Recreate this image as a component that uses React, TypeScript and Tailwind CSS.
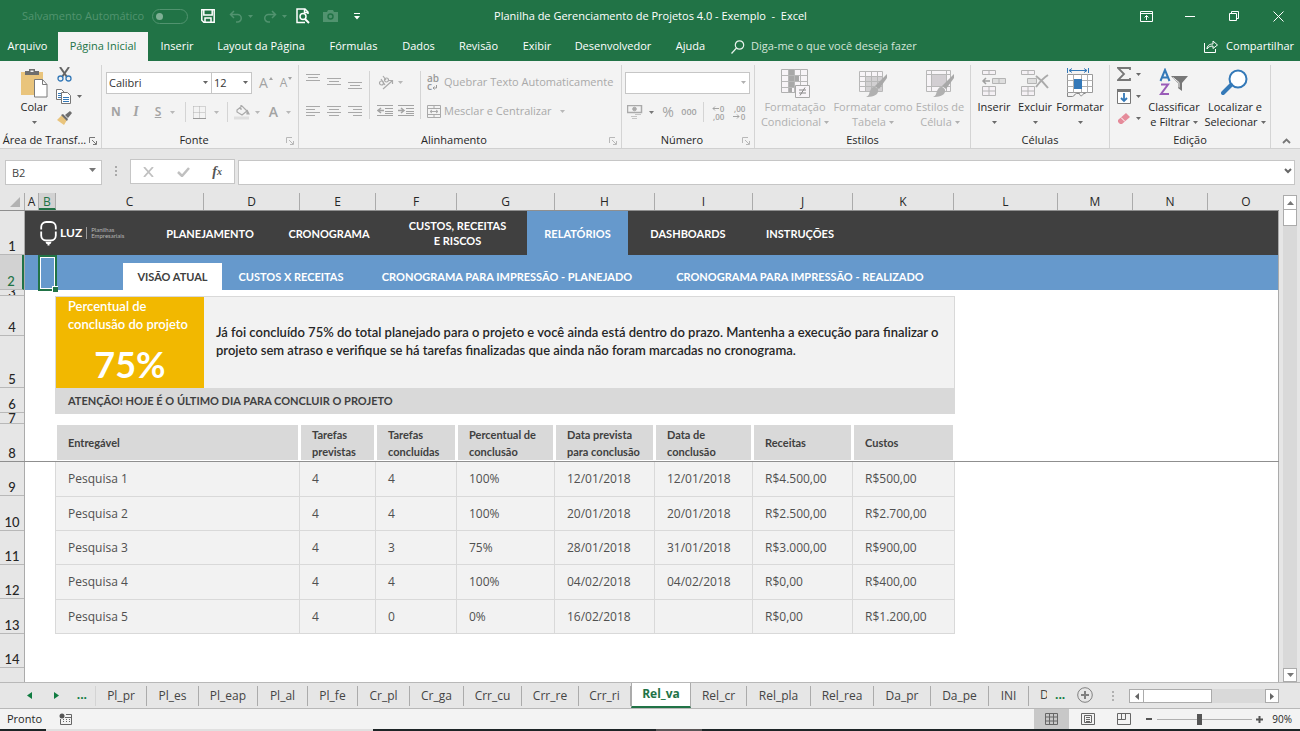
import React from 'react';

type Children = { children?: React.ReactNode };

const UI = "font-['Open_Sans','Noto_Sans',sans-serif]";
const CALIBRI = "font-['Lato','Open_Sans',sans-serif]";

const ribbonTabs = [
  { label: 'Arquivo', width: 'w-[58px]' },
  { label: 'Página Inicial', width: 'w-[90px]', active: true },
  { label: 'Inserir', width: 'w-[58px]' },
  { label: 'Layout da Página', width: 'w-[110px]' },
  { label: 'Fórmulas', width: 'w-[75px]' },
  { label: 'Dados', width: 'w-[55px]' },
  { label: 'Revisão', width: 'w-[65px]' },
  { label: 'Exibir', width: 'w-[52px]' },
  { label: 'Desenvolvedor', width: 'w-[100px]' },
  { label: 'Ajuda', width: 'w-[55px]' },
];

const columns = [
  { label: 'A', width: 'w-[14px]' },
  { label: 'B', width: 'w-[17px]', active: true },
  { label: 'C', width: 'w-[148px]' },
  { label: 'D', width: 'w-[96px]' },
  { label: 'E', width: 'w-[76px]' },
  { label: 'F', width: 'w-[81px]' },
  { label: 'G', width: 'w-[98px]' },
  { label: 'H', width: 'w-[100px]' },
  { label: 'I', width: 'w-[98px]' },
  { label: 'J', width: 'w-[100px]' },
  { label: 'K', width: 'w-[101px]' },
  { label: 'L', width: 'w-[104px]' },
  { label: 'M', width: 'w-[75px]' },
  { label: 'N', width: 'w-[75px]' },
];

const rows = [
  { label: '1', height: 'h-11 leading-4' },
  { label: '2', height: 'h-[35px] leading-4', active: true },
  { label: '3', height: 'h-[6px] leading-[5px]' },
  { label: '4', height: 'h-10 leading-4' },
  { label: '5', height: 'h-[52px] leading-4' },
  { label: '6', height: 'h-[25px] leading-4' },
  { label: '7', height: 'h-[11px] leading-[10px]' },
  { label: '8', height: 'h-[38px] leading-4' },
  { label: '9', height: 'h-[34px] leading-4' },
  { label: '10', height: 'h-[35px] leading-4' },
  { label: '11', height: 'h-[34px] leading-4' },
  { label: '12', height: 'h-[34px] leading-4' },
  { label: '13', height: 'h-[35px] leading-4' },
  { label: '14', height: 'h-[34px] leading-4' },
];

const tasks = [
  { height: 'h-[35px]', cells: ['Pesquisa 1', '4', '4', '100%', '12/01/2018', '12/01/2018', 'R$4.500,00', 'R$500,00'] },
  { height: 'h-[34px]', cells: ['Pesquisa 2', '4', '4', '100%', '20/01/2018', '20/01/2018', 'R$2.500,00', 'R$2.700,00'] },
  { height: 'h-[34px]', cells: ['Pesquisa 3', '4', '3', '75%', '28/01/2018', '31/01/2018', 'R$3.000,00', 'R$900,00'] },
  { height: 'h-[35px]', cells: ['Pesquisa 4', '4', '4', '100%', '04/02/2018', '04/02/2018', 'R$0,00', 'R$400,00'] },
  { height: 'h-[34px]', cells: ['Pesquisa 5', '4', '0', '0%', '16/02/2018', '', 'R$0,00', 'R$1.200,00'] },
];

const tableHead = [
  { label: 'Entregável', width: 'w-[245px]' },
  { label: 'Tarefas previstas', width: 'w-[76px]' },
  { label: 'Tarefas concluídas', width: 'w-[81px]' },
  { label: 'Percentual de conclusão', width: 'w-[98px]' },
  { label: 'Data prevista para conclusão', width: 'w-[100px]' },
  { label: 'Data de conclusão', width: 'w-[98px]' },
  { label: 'Receitas', width: 'w-[100px]' },
  { label: 'Custos', width: 'w-[102px]' },
];

const mainNav = [
  { label: 'PLANEJAMENTO', width: 'w-[120px]' },
  { label: 'CRONOGRAMA', width: 'w-[118px]' },
  { label: 'CUSTOS, RECEITAS E RISCOS', width: 'w-[139px] px-5' },
  { label: 'RELATÓRIOS', width: 'w-[101px]', active: true },
  { label: 'DASHBOARDS', width: 'w-[120px]' },
  { label: 'INSTRUÇÕES', width: 'w-[104px]' },
];

const subNav = [
  { label: 'VISÃO ATUAL', width: 'w-[99px]', active: true },
  { label: 'CUSTOS X RECEITAS', width: 'w-[138px]' },
  { label: 'CRONOGRAMA PARA IMPRESSÃO - PLANEJADO', width: 'w-[294px]' },
  { label: 'CRONOGRAMA PARA IMPRESSÃO - REALIZADO', width: 'w-[292px]' },
];

const sheetTabs = [
  { label: 'Pl_pr', width: 'w-[51px]' },
  { label: 'Pl_es', width: 'w-[52px]' },
  { label: 'Pl_eap', width: 'w-[59px]' },
  { label: 'Pl_al', width: 'w-[50px]' },
  { label: 'Pl_fe', width: 'w-[50px]' },
  { label: 'Cr_pl', width: 'w-[52px]' },
  { label: 'Cr_ga', width: 'w-[54px]' },
  { label: 'Crr_cu', width: 'w-[58px]' },
  { label: 'Crr_re', width: 'w-[57px]' },
  { label: 'Crr_ri', width: 'w-[52px]' },
  { label: 'Rel_va', width: 'w-[60px]', active: true },
  { label: 'Rel_cr', width: 'w-[56px]' },
  { label: 'Rel_pla', width: 'w-[64px]' },
  { label: 'Rel_rea', width: 'w-[63px]' },
  { label: 'Da_pr', width: 'w-[57px]' },
  { label: 'Da_pe', width: 'w-[58px]' },
  { label: 'INI', width: 'w-[40px]' },
];

const Caret = ({ className = 'text-[#6a6a6a]' }: { className?: string }) => (
  <svg width="5" height="3" viewBox="0 0 5 3" className={`shrink-0 ${className}`} aria-hidden="true">
    <path d="M0 0h5L2.5 3z" fill="currentColor" />
  </svg>
);

const Tool = ({ label, className = '', children }: Children & { label: string; className?: string }) => (
  <button type="button" aria-label={label} className={`flex h-4 shrink-0 items-center justify-center ${className}`}>
    {children}
  </button>
);

const Divider = ({ className = 'h-5' }: { className?: string }) => <span className={`w-px shrink-0 bg-[#d4d4d4] ${className}`} />;

const Group = ({ label, width, launcher, dim, children }: Children & { label: string; width: string; launcher?: boolean; dim?: boolean }) => (
  <section aria-label={label} className={`mt-1 flex shrink-0 flex-col border-r border-[#d4d4d4] ${width}`}>
    <div className="flex flex-1">{children}</div>
    <div className="flex h-[15px] items-center">
      <span className="flex-1 text-center whitespace-nowrap text-[#262626]">{label}</span>
      {launcher && (
        <button type="button" aria-label={`Opções de ${label}`} className={`mr-1 ${dim ? 'text-[#b8b8b8]' : 'text-[#777]'}`}>
          <svg width="8" height="8" viewBox="0 0 8 8" fill="none" stroke="currentColor" aria-hidden="true">
            <path d="M.5 6V.5H6M3 3l4 4M7.500 4v3.500H4" />
          </svg>
        </button>
      )}
    </div>
  </section>
);

const BigButton = ({ icon, lines, width, dim, caretBelow }: { icon: React.ReactNode; lines: string[]; width: string; dim?: boolean; caretBelow?: boolean }) => (
  <button type="button" className={`flex shrink-0 flex-col items-center justify-start pt-[2px] ${dim ? 'text-[#b0b0b0]' : 'text-[#262626]'} ${width}`}>
    <span className="mb-px flex h-8 items-center">{icon}</span>
    {lines.map((line, i) => (
      <span key={line} className="flex h-[15px] items-center gap-[3px] whitespace-nowrap">
        {line}
        {!caretBelow && i === lines.length - 1 && <Caret className={dim ? 'text-[#b0b0b0]' : 'text-[#6a6a6a]'} />}
      </span>
    ))}
    {caretBelow && (
      <span className="flex h-[15px] items-center">
        <Caret />
      </span>
    )}
  </button>
);

const AlignIcon = ({ lines }: { lines: [number, number][] }) => (
  <svg width="14" height="17" viewBox="0 0 14 17" stroke="#a9a9a9" aria-hidden="true">
    {lines.map(([x, w], i) => (
      <path key={i} d={`M${x} ${i * 3 + 3.5}h${w}`} />
    ))}
  </svg>
);

const VAlignIcon = ({ top }: { top: number }) => (
  <svg width="14" height="18" viewBox="0 0 14 18" stroke="#a9a9a9" aria-hidden="true">
    <path d={`M0 ${top + 0.5}h14M2 ${top + 3.5}h10M0 ${top + 6.5}h14`} />
  </svg>
);

const IndentIcon = ({ flip }: { flip?: boolean }) => (
  <svg width="16" height="12" viewBox="0 0 16 12" fill="none" stroke="#a3a3a3" aria-hidden="true">
    <path d="M0 .5h16M8 3.500h8M8 6.500h8M0 10.500h16M8 8.500h8" />
    <path d={flip ? 'M0 5.500h6M3 3l3 2.500L3 8' : 'M7 5.500H1M4 3L1 5.500L4 8'} strokeWidth="1.500" />
  </svg>
);

// arrow and zero on one line, two decimals on the other
const DecimalsIcon = ({ decrease }: { decrease?: boolean }) => (
  <span className={`flex items-end gap-[2px] text-[8px] leading-[11px] font-semibold ${decrease ? 'flex-col-reverse' : 'flex-col'}`}>
    <span className="flex h-[6px] items-center gap-px">
      <svg width="7" height="5" viewBox="0 0 7 5" fill="none" stroke="currentColor" aria-hidden="true">
        <path d={decrease ? 'M0 2.500h6M4 .5l2 2-2 2' : 'M7 2.500H1M3 .5l-2 2 2 2'} />
      </svg>
      0
    </span>
    <span className="flex h-[6px] items-center">,00</span>
  </span>
);

const BrushIcon = () => (
  <>
    <path d="M29 6v4l-8 11-4-3z" fill="#a8a8a8" />
    <path d="M16 19c2 0 5 2 4 5-1 4-7 5-12 5 3-1 3-3 4-6 1-2 2-4 4-4z" fill="#b0b0b0" />
  </>
);

const FormatTableIcon = () => (
  <svg width="30" height="30" viewBox="0 0 30 30" fill="none" aria-hidden="true">
    <path d="M1.500 3.500h23v20h-23z" fill="#f7f4f7" stroke="#b8b8b8" />
    <path d="M7 9h17v14H7z" fill="#d2d0d2" />
    <path d="M1.500 8.500h23M1.500 13.500h23M1.500 18.500h23M7.500 3.500v20M13.500 3.500v20M19.500 3.500v20" stroke="#b8b8b8" />
    <BrushIcon />
  </svg>
);

const CellStyleIcon = () => (
  <svg width="30" height="30" viewBox="0 0 30 30" fill="none" aria-hidden="true">
    <path d="M1.500 2.500h24v21h-24z" fill="#f7f4f7" stroke="#b8b8b8" />
    <path d="M7 7h14v11H7z" fill="#d2ced2" />
    <path d="M1.500 6.500h24M1.500 18.500h24M6.500 2.500v21M21.500 2.500v21" stroke="#b8b8b8" />
    <BrushIcon />
  </svg>
);

const ConditionalIcon = () => (
  <svg width="30" height="30" viewBox="0 0 30 30" fill="none" aria-hidden="true">
    <path d="M1.500 1.500h26v23h-26z" fill="#f7f4f7" stroke="#b0b0b0" />
    <path d="M9 2h6v5H9zM9 8h10v5H9zM9 14h5v5H9zM9 20h3v4H9z" fill="#a8a8a8" />
    <path d="M1.500 7.500h26M1.500 13.500h26M1.500 19.500h26M8.500 1.500v23M14.500 1.500v23M20.500 1.500v23" stroke="#b8b8b8" />
    <path d="M15.500 17.500h14v12h-14z" fill="#f8f5f8" stroke="#a8a8a8" />
    <path d="M19 22h7M19 25h7M25 19.500l-5 8" stroke="#888" />
  </svg>
);

const InsertIcon = () => (
  <svg width="26" height="30" viewBox="0 0 26 30" fill="#f5f1f5" stroke="#b4b4b4" aria-hidden="true">
    <path d="M1.500 2.500h13v4h-13zM8 2.500v4M1.500 18.500h13v9h-13zM8 18.500v9M1.500 23h13" />
    <path d="M11.500 10.500h13v5h-13z" fill="#dedede" />
    <path d="M18 10.500v5" />
    <path d="M9 13H2M5 10l-3 3 3 3" fill="none" strokeWidth="1.500" stroke="#a0a0a0" />
  </svg>
);

const DeleteIcon = () => (
  <svg width="30" height="30" viewBox="0 0 30 30" fill="#f5f1f5" stroke="#b4b4b4" aria-hidden="true">
    <path d="M1.500 2.500h13v4h-13zM8 2.500v4M1.500 18.500h13v9h-13zM8 18.500v9M1.500 23h13" />
    <path d="M7.500 10.500h9v5h-9z" fill="#dedede" />
    <path d="M16 8c4 3 8 7 12 12M28 7c-5 3-9 8-12 12" fill="none" strokeWidth="2" stroke="#aaa" />
  </svg>
);

const FormatIcon = () => (
  <svg width="28" height="30" viewBox="0 0 28 30" fill="none" aria-hidden="true">
    <path d="M1.500 6.500h25v18h-25z" fill="#fff" stroke="#999" />
    <path d="M1.500 12.500h25M1.500 18.500h25M7.500 6.500v18M15.500 6.500v18M21.500 6.500v18" stroke="#b0b0b0" />
    <path d="M8 11h8v10H8z" fill="#3479b8" />
    <path d="M1.500 25v3.500h5c2 0 2-3 4-3h3c0 3 3 3 4 0h2" stroke="#888" />
    <path d="M1.500 0v5M22.500 0v5M3 2.500h18M6 .5l-3 2 3 2M18 .5l3 2-3 2" stroke="#3479b8" />
  </svg>
);

const SortIcon = () => (
  <svg width="30" height="30" viewBox="0 0 30 30" aria-hidden="true">
    <path d="M1.500 13L6 2l4.500 11M3 9.500h6" fill="none" stroke="#3479b8" strokeWidth="2" />
    <path d="M2 16.500h7l-7 9.500h8" fill="none" stroke="#9a5cb8" strokeWidth="2" />
    <path d="M12 8h17l-6 7v8l-4-3v-5z" fill="#777" />
    <path d="M14 9.500l6 5v5" fill="none" stroke="#f3f3f3" />
  </svg>
);

const FindIcon = () => (
  <svg width="28" height="30" viewBox="0 0 28 30" fill="none" aria-hidden="true">
    <circle cx="17" cy="11" r="8.500" fill="#fff" stroke="#3479b8" strokeWidth="2" />
    <path d="M10 17l-8 8" stroke="#3479b8" strokeWidth="4" strokeLinecap="round" />
  </svg>
);

const PasteIcon = () => (
  <svg width="28" height="30" viewBox="0 0 28 30" aria-hidden="true">
    <path d="M1 4h22v23H1z" fill="#e9c47c" />
    <path d="M5 7V3h4V1h6v2h4v4z" fill="#6e6e6e" />
    <path d="M10.500 2.500h3V4h-3z" fill="#f3f3f3" />
    <path d="M14.500 11.500h8l4.500 5v12.500H14.500z" fill="#fff" stroke="#7a7a7a" />
    <path d="M22.500 11.500v5H27" fill="none" stroke="#7a7a7a" />
  </svg>
);

function TitleBar() {
  return (
    <header className="flex h-8 items-center bg-[#217346] pl-[22px] text-[11px] text-white">
      <label className="flex w-[166px] items-center justify-between text-[#51936f]">
        <span className="whitespace-nowrap">Salvamento Automático</span>
        <input
          type="checkbox"
          role="switch"
          disabled
          className="h-[15px] w-9 appearance-none rounded-full border border-[#51936f] before:m-[3px] before:block before:size-[7px] before:rounded-full before:bg-[#7fb095]"
        />
      </label>
      <div className="ml-3 flex items-center">
        <Tool label="Salvar" className="w-4">
          <svg width="14" height="14" viewBox="0 0 14 14" fill="none" stroke="#fff" strokeWidth="1.500" aria-hidden="true">
            <path d="M.8.800h12.400v12.400H2.800l-2-2zM2.800 1v5h8.400V1M4 13V9h6v4" />
          </svg>
        </Tool>
        <Tool label="Desfazer" className="ml-3 w-[26px] gap-[5px] text-[#51936f]">
          <svg width="14" height="13" viewBox="0 0 14 13" fill="none" stroke="currentColor" strokeWidth="1.500" aria-hidden="true">
            <path d="M5 1L1.500 4.500 5 8M2 4.500h6.500a3.500 3.500 0 0 1 0 7.500H7" />
          </svg>
          <Caret className="text-[#51936f]" />
        </Tool>
        <Tool label="Refazer" className="ml-2 w-[26px] gap-[5px] text-[#51936f]">
          <svg width="14" height="13" viewBox="0 0 14 13" fill="none" stroke="currentColor" strokeWidth="1.500" aria-hidden="true">
            <path d="M9 1l3.500 3.500L9 8M12 4.500H5.500a3.500 3.500 0 0 0 0 7.500H7" />
          </svg>
          <Caret className="text-[#51936f]" />
        </Tool>
        <Tool label="Visualizar impressão" className="ml-[7px] w-4">
          <svg width="14" height="16" viewBox="0 0 14 16" fill="none" stroke="#fff" strokeWidth="1.500" aria-hidden="true">
            <path d="M12 6V4L9 1H1v13.500h8M8.500 1v3.500H12" />
            <circle cx="7" cy="8.500" r="3" />
            <path d="M9 11l4 4" strokeWidth="2" />
          </svg>
        </Tool>
        <Tool label="Câmera" className="ml-[11px] w-4">
          <svg width="15" height="12" viewBox="0 0 15 12" aria-hidden="true">
            <path d="M0 2h4l1-2h5l1 2h4v10H0z" fill="#51936f" />
            <circle cx="7.500" cy="6.500" r="2.500" fill="none" stroke="#217346" strokeWidth="1.500" />
          </svg>
        </Tool>
        <Tool label="Personalizar" className="ml-[15px] w-2">
          <svg width="6" height="7" viewBox="0 0 6 7" fill="#fff" aria-hidden="true">
            <path d="M0 0h6v1H0zM0 3h6L3 6.500z" />
          </svg>
        </Tool>
      </div>
      <h1 className="flex-1 pr-[184px] text-center whitespace-pre">Planilha de Gerenciamento de Projetos 4.0 - Exemplo  -  Excel</h1>
      <div className="flex items-center pr-4">
        <Tool label="Opções da faixa" className="w-11">
          <svg width="13" height="11" viewBox="0 0 13 11" fill="none" stroke="#fff" aria-hidden="true">
            <path d="M.5.500h12v10H.5zM.5 2.500h12M6.500 9V4.500M4.500 6.500l2-2 2 2" />
          </svg>
        </Tool>
        <Tool label="Minimizar" className="w-11">
          <span className="h-px w-[10px] bg-white" />
        </Tool>
        <Tool label="Restaurar" className="w-11">
          <svg width="10" height="10" viewBox="0 0 10 10" fill="none" stroke="#fff" aria-hidden="true">
            <path d="M.5 2.500h7v7h-7zM2.500 2.500v-2h7v7h-2" />
          </svg>
        </Tool>
        <Tool label="Fechar" className="ml-4 w-3">
          <svg width="11" height="11" viewBox="0 0 11 11" fill="none" stroke="#fff" aria-hidden="true">
            <path d="M.5.500l10 10M10.500.500l-10 10" />
          </svg>
        </Tool>
      </div>
    </header>
  );
}

function RibbonTabs() {
  return (
    <nav className="flex h-[29px] items-stretch bg-[#217346] text-[11px] text-white">
      {ribbonTabs.map((tab) => (
        <button
          key={tab.label}
          type="button"
          className={`shrink-0 font-medium whitespace-nowrap ${tab.width} ${tab.label === 'Arquivo' ? 'pr-[3px]' : ''} ${tab.active ? 'bg-[#f3f3f3] text-[#217346]' : ''}`}
        >
          {tab.label}
        </button>
      ))}
      <label className="ml-[13px] flex items-center gap-[6px] text-[#d3e5da]">
        <svg width="14" height="14" viewBox="0 0 14 14" fill="none" stroke="#e8f2ec" strokeWidth="1.200" aria-hidden="true">
          <circle cx="8.500" cy="5" r="4.200" />
          <path d="M5.500 8L.5 13.500" />
        </svg>
        <input type="text" placeholder="Diga-me o que você deseja fazer" className="w-[200px] bg-transparent outline-none placeholder:text-[#d3e5da]" />
      </label>
      <button type="button" className="mr-[6px] ml-auto flex items-center gap-2 font-medium">
        <svg width="14" height="13" viewBox="0 0 14 13" fill="none" stroke="#fff" aria-hidden="true">
          <path d="M.5 3v9.500h11V9M3 9c0-3 2-5 6-5V1l4.500 4L9 8.500V6C6 6 4 7 3 9z" />
        </svg>
        Compartilhar
      </button>
    </nav>
  );
}

function ClipboardGroup() {
  return (
    <Group label="Área de Transf..." width="w-[102px]" launcher>
      <div className="flex gap-[3px] pl-[15px]">
        <BigButton icon={<PasteIcon />} lines={['Colar']} width="w-[38px]" caretBelow />
        <div className="flex flex-col gap-[6px] pt-px">
          <Tool label="Recortar" className="w-4">
            <svg width="15" height="15" viewBox="0 0 15 15" fill="none" aria-hidden="true">
              <path d="M3 0l7 10M12 0L5 10" stroke="#666" strokeWidth="2" />
              <circle cx="3.500" cy="11.500" r="2.500" stroke="#3479b8" strokeWidth="1.300" />
              <circle cx="11.500" cy="11.500" r="2.500" stroke="#3479b8" strokeWidth="1.300" />
            </svg>
          </Tool>
          <Tool label="Copiar" className="w-[26px] gap-[5px]">
            <svg width="16" height="15" viewBox="0 0 16 15" fill="#fff" stroke="#777" className="shrink-0" aria-hidden="true">
              <path d="M.5.500h5l3 3v7h-8z" />
              <path d="M5.500 3.500h6l3 3v8h-9z" />
              <path d="M2 4.500h3M2 6.500h3M2 8.500h3M7 8.500h6M7 10.500h6M7 12.500h6" stroke="#3479b8" />
            </svg>
            <Caret />
          </Tool>
          <Tool label="Pincel" className="w-4">
            <svg width="15" height="14" viewBox="0 0 15 14" aria-hidden="true">
              <path d="M0 9l5-5 5 5-3 5z" fill="#e9c47c" />
              <path d="M4 4l2-1 5 5-1 2zM8 4l5-4 2 2-4 5z" fill="#6e6e6e" />
            </svg>
          </Tool>
        </div>
      </div>
    </Group>
  );
}

function FontGroup() {
  return (
    <Group label="Fonte" width="w-[197px]" launcher dim>
      <div className="flex flex-1 flex-col gap-2 pt-[7px] pl-1">
        <div className="flex items-center">
          <div className="relative h-[22px] w-[106px]">
            <select aria-label="Fonte" className="size-full appearance-none border border-[#c6c6c6] bg-white pl-[2px] text-[#333]">
              <option>Calibri</option>
            </select>
            <Caret className="absolute top-[9px] right-1 text-[#666]" />
          </div>
          <div className="relative -ml-px h-[22px] w-[41px]">
            <select aria-label="Tamanho" className="size-full appearance-none border border-[#c6c6c6] bg-white pl-[2px] text-[#333]">
              <option>12</option>
            </select>
            <Caret className="absolute top-[9px] right-1 text-[#666]" />
          </div>
          <Tool label="Aumentar fonte" className="ml-[6px] w-4 gap-px text-sm text-[#a3a3a3]">
            A
            <svg width="4" height="12" viewBox="0 0 4 12" fill="currentColor" aria-hidden="true">
              <path d="M0 3l2-3 2 3z" />
            </svg>
          </Tool>
          <Tool label="Diminuir fonte" className="ml-1 w-4 gap-px text-xs text-[#a3a3a3]">
            A
            <svg width="4" height="12" viewBox="0 0 4 12" fill="currentColor" aria-hidden="true">
              <path d="M0 0h4L2 3z" />
            </svg>
          </Tool>
        </div>
        <div className="flex items-center pl-1 text-xs text-[#a3a3a3]">
          <Tool label="Negrito" className="w-3 font-bold">N</Tool>
          <Tool label="Itálico" className="ml-2 w-3 font-['Liberation_Serif',serif] text-sm font-bold italic">I</Tool>
          <Tool label="Sublinhado" className="ml-[10px] w-[26px] gap-[9px] font-semibold">
            <span className="underline">S</span>
            <Caret className="text-[#b8b8b8]" />
          </Tool>
          <Divider className="ml-[7px] h-5" />
          <Tool label="Bordas" className="ml-[7px] w-[26px] gap-2">
            <svg width="13" height="13" viewBox="0 0 13 13" fill="none" stroke="#b0b0b0" aria-hidden="true">
              <path d="M.5.500h12M.5 6.500h12M.5.500v12M6.500.500v12M12.500.500v12" strokeDasharray="1 1" />
              <path d="M0 12.500h13" stroke="#999" />
            </svg>
            <Caret className="text-[#b8b8b8]" />
          </Tool>
          <Divider className="ml-2 h-5" />
          <Tool label="Preenchimento" className="ml-[6px] w-[26px] gap-[5px]">
            <svg width="16" height="16" viewBox="0 0 16 16" fill="none" stroke="#aaa" strokeWidth="1.200" aria-hidden="true">
              <path d="M7 1v5M3 6l5-4 5 5-5 4-5-3z" />
              <path d="M13 6l2 4h-2z" fill="#aaa" />
              <path d="M0 14h15" stroke="#dedede" strokeWidth="3" />
            </svg>
            <Caret className="text-[#b8b8b8]" />
          </Tool>
          <Tool label="Cor da fonte" className="ml-[7px] w-[26px] gap-2 text-sm font-semibold">
            A
            <Caret className="text-[#b8b8b8]" />
          </Tool>
        </div>
      </div>
    </Group>
  );
}

function AlignmentGroup() {
  return (
    <Group label="Alinhamento" width="w-[323px]" launcher dim>
      <div className="flex flex-1 pt-[6px] pl-[7px] text-[#a9a9a9]">
        <div className="flex flex-col gap-[10px]">
          <div className="flex h-[22px] items-center gap-[7px]">
            <Tool label="Alinhar em cima"><VAlignIcon top={1} /></Tool>
            <Tool label="Alinhar no meio"><VAlignIcon top={5} /></Tool>
            <Tool label="Alinhar embaixo"><VAlignIcon top={9} /></Tool>
          </div>
          <div className="flex items-center gap-[7px]">
            <Tool label="Alinhar à esquerda"><AlignIcon lines={[[0, 14], [0, 9], [0, 14], [0, 9]]} /></Tool>
            <Tool label="Centralizar"><AlignIcon lines={[[0, 14], [2, 10], [0, 14], [2, 10]]} /></Tool>
            <Tool label="Alinhar à direita"><AlignIcon lines={[[0, 14], [5, 9], [0, 14], [5, 9]]} /></Tool>
          </div>
        </div>
        <Divider className="mx-[7px] h-12" />
        <div className="flex flex-col gap-[10px]">
          <div className="flex h-[22px] items-center">
            <Tool label="Orientação" className="w-[27px] gap-1">
              <svg width="16" height="15" viewBox="0 0 16 15" fill="none" stroke="#a9a9a9" strokeWidth="1.200" aria-hidden="true">
                <circle cx="3.500" cy="8" r="2" />
                <circle cx="8.500" cy="5" r="2" />
                <path d="M3 4l4 6M5 1l3 4M5 14l9-8M11 5.500h3.500V9" />
              </svg>
              <Caret className="text-[#b8b8b8]" />
            </Tool>
          </div>
          <div className="flex items-center gap-[5px]">
            <Tool label="Diminuir recuo"><IndentIcon /></Tool>
            <Tool label="Aumentar recuo"><IndentIcon flip /></Tool>
          </div>
        </div>
        <Divider className="mx-[6px] h-12" />
        <div className="flex flex-col gap-[10px]">
          <button type="button" className="flex h-[22px] items-center gap-[3px] whitespace-nowrap">
            <span className="flex w-[14px] flex-col items-start text-[10px] leading-[8px] font-semibold text-[#999]">
              ab
              <span className="flex items-end">
                c
                <svg width="5" height="5" viewBox="0 0 5 5" fill="none" stroke="currentColor" aria-hidden="true">
                  <path d="M4.500 0v3H1M2.500 1.500L1 3l1.500 1.500" />
                </svg>
              </span>
            </span>
            Quebrar Texto Automaticamente
          </button>
          <button type="button" className="flex h-4 items-center gap-[3px] whitespace-nowrap">
            <svg width="14" height="13" viewBox="0 0 14 13" fill="none" stroke="#a9a9a9" aria-hidden="true">
              <path d="M.5.500h13v12H.5zM.5 3.500h13M.5 9.500h13M7 .5v3M7 9.500v3M3 6.500h8M5 5L3 6.500 5 8M9 5l2 1.500L9 8" />
            </svg>
            Mesclar e Centralizar
            <Caret className="ml-[5px] text-[#b8b8b8]" />
          </button>
        </div>
      </div>
    </Group>
  );
}

function NumberGroup() {
  return (
    <Group label="Número" width="w-[133px]" launcher dim>
      <div className="flex flex-1 flex-col gap-2 pt-[7px] pr-1 pl-[3px]">
        <div className="relative h-[22px]">
          <select aria-label="Formato de número" className="size-full appearance-none border border-[#c6c6c6] bg-white">
            <option></option>
          </select>
          <Caret className="absolute top-[9px] right-1 text-[#b0b0b0]" />
        </div>
        <div className="flex items-center pl-[2px] text-[#a3a3a3]">
          <Tool label="Formato de contabilização" className="w-[27px] gap-[6px]">
            <svg width="16" height="14" viewBox="0 0 16 14" fill="none" stroke="#aaa" aria-hidden="true">
              <path d="M.5.500h14v7H.5z" strokeWidth="1.500" />
              <circle cx="7.500" cy="4" r="1.800" fill="#aaa" />
              <path d="M8 9.500h6M4 11.500h6M5 13.500h5" stroke="#c4c4c4" />
            </svg>
            <Caret className="text-[#777]" />
          </Tool>
          <Tool label="Porcentagem" className="ml-[6px] w-4 text-sm">%</Tool>
          <Tool label="Milhares" className="ml-[5px] w-4 text-[9px] font-semibold">000</Tool>
          <Divider className="mx-[6px] h-5" />
          <Tool label="Aumentar casas" className="w-4">
            <DecimalsIcon />
          </Tool>
          <Tool label="Diminuir casas" className="ml-[5px] w-4">
            <DecimalsIcon decrease />
          </Tool>
        </div>
      </div>
    </Group>
  );
}

function EditingGroup() {
  return (
    <Group label="Edição" width="w-[161px]">
      <div className="flex w-[32px] flex-col gap-[6px] pt-px pl-[7px]">
        <Tool label="AutoSoma" className="w-6 gap-[5px]">
          <svg width="14" height="14" viewBox="0 0 14 14" fill="none" stroke="#777" strokeWidth="1.800" aria-hidden="true">
            <path d="M13 3V1H1l6 6-6 6h12v-2" />
          </svg>
          <Caret />
        </Tool>
        <Tool label="Preencher" className="w-6 gap-[5px]">
          <svg width="14" height="15" viewBox="0 0 14 15" fill="#fff" stroke="#777" aria-hidden="true">
            <path d="M.5.500h13v14H.5z" />
            <path d="M0 1.500h14" strokeWidth="3" />
            <path d="M7 4v8M4 9l3 3 3-3" fill="none" stroke="#3479b8" strokeWidth="1.800" />
          </svg>
          <Caret />
        </Tool>
        <Tool label="Limpar" className="w-6 gap-[5px]">
          <svg width="14" height="13" viewBox="0 0 14 13" aria-hidden="true">
            <path d="M1 8l8-7 4 4-8 7H3L1 10z" fill="#e58b9a" />
            <path d="M4 5.500l4 4" stroke="#fff" />
          </svg>
          <Caret />
        </Tool>
      </div>
      <BigButton icon={<SortIcon />} lines={['Classificar', 'e Filtrar']} width="w-[64px]" />
      <BigButton icon={<FindIcon />} lines={['Localizar e', 'Selecionar']} width="w-[58px]" />
    </Group>
  );
}

function Ribbon() {
  return (
    <div className="flex h-[88px] border-b border-[#d0d0d0] bg-[#f3f3f3] text-[11px]">
      <ClipboardGroup />
      <FontGroup />
      <AlignmentGroup />
      <NumberGroup />
      <Group label="Estilos" width="w-[216px]">
        <BigButton icon={<ConditionalIcon />} lines={['Formatação', 'Condicional']} width="w-[80px]" dim />
        <BigButton icon={<FormatTableIcon />} lines={['Formatar como', 'Tabela']} width="w-[76px]" dim />
        <BigButton icon={<CellStyleIcon />} lines={['Estilos de', 'Célula']} width="w-[58px]" dim />
      </Group>
      <Group label="Células" width="w-[139px]">
        <BigButton icon={<InsertIcon />} lines={['Inserir']} width="w-[46px]" caretBelow />
        <BigButton icon={<DeleteIcon />} lines={['Excluir']} width="w-[36px]" caretBelow />
        <BigButton icon={<FormatIcon />} lines={['Formatar']} width="w-[54px]" caretBelow />
      </Group>
      <EditingGroup />
      <button type="button" aria-label="Recolher faixa" className="mt-auto mr-[9px] mb-1 ml-auto">
        <svg width="9" height="6" viewBox="0 0 9 6" fill="none" stroke="#777" strokeWidth="1.800" aria-hidden="true">
          <path d="M1 5l3.500-3.500L8 5" />
        </svg>
      </button>
    </div>
  );
}

function FormulaBar() {
  return (
    <div className="flex items-center px-[5px] pt-[10px] pb-[9px]">
      <div className="relative h-[25px] w-[97px]">
        <input aria-label="Caixa de nome" defaultValue="B2" className="size-full border border-[#c6c6c6] bg-white pl-[6px] text-[11px] text-[#444]" />
        <svg width="7" height="4" viewBox="0 0 7 4" className="absolute top-[9px] right-[6px]" aria-hidden="true">
          <path d="M0 0h7L3.500 4z" fill="#777" />
        </svg>
      </div>
      <svg width="2" height="11" viewBox="0 0 2 11" fill="#aaa" className="mx-[13px]" aria-hidden="true">
        <path d="M0 0h2v2H0zM0 4h2v2H0zM0 8h2v2H0z" />
      </svg>
      <div className="flex h-[25px] w-[105px] items-center justify-between border border-[#c6c6c6] bg-white px-3">
        <Tool label="Cancelar">
          <svg width="11" height="10" viewBox="0 0 11 10" stroke="#c0c0c0" strokeWidth="1.800" aria-hidden="true">
            <path d="M1 0l9 10M10 0L1 10" />
          </svg>
        </Tool>
        <Tool label="Inserir">
          <svg width="13" height="10" viewBox="0 0 13 10" fill="none" stroke="#c0c0c0" strokeWidth="2.500" aria-hidden="true">
            <path d="M1 5l4 4 7-8" />
          </svg>
        </Tool>
        <Tool label="Inserir função" className="font-['Liberation_Serif',serif] text-sm font-bold text-[#555] italic">
          f<span className="pt-px text-[10px]">x</span>
        </Tool>
      </div>
      <div className="relative ml-[3px] h-[25px] flex-1">
        <input aria-label="Barra de fórmulas" className="size-full border border-[#c6c6c6] bg-white px-2 text-[11px]" />
        <svg width="8" height="6" viewBox="0 0 8 6" fill="none" stroke="#666" strokeWidth="2" className="absolute top-[9px] right-[3px]" aria-hidden="true">
          <path d="M1 1l3 3 3-3" />
        </svg>
      </div>
    </div>
  );
}

function ColumnHeader() {
  return (
    <div className="flex h-[18px] overflow-hidden border-b border-[#8f8f8f] text-xs font-medium text-[#262626]">
      <button type="button" aria-label="Selecionar tudo" className="flex w-[25px] shrink-0 items-end justify-end border-r border-[#ababab] pr-1 pb-[3px]">
        <svg width="10" height="10" viewBox="0 0 10 10" aria-hidden="true">
          <path d="M10 0v10H0z" fill="#b2b2b2" />
        </svg>
      </button>
      {columns.map((col) => (
        <div
          key={col.label}
          className={`shrink-0 border-r border-[#ababab] text-center leading-[18px] ${col.width} ${
            col.active ? 'border-b-2 border-b-[#217346] bg-[#d2d2d2] text-[#217346]' : ''
          }`}
        >
          {col.label}
        </div>
      ))}
      <div className="w-[76px] shrink-0 text-center leading-[18px]">O</div>
    </div>
  );
}

function Logo() {
  return (
    <div className="flex w-[125px] shrink-0 items-center pl-[15px] text-white">
      <svg width="17" height="25" viewBox="0 0 17 25" fill="none" stroke="#fff" strokeWidth="1.800" aria-hidden="true">
        <path d="M1.200 8.500V6a5 5 0 0 1 5-5h4.600a5 5 0 0 1 5 5v2.500M1.200 10.500v4a5 5 0 0 0 5 5h4.600a5 5 0 0 0 5-5v-4" />
        <path d="M5.500 21h6l-1 2h-1v1.500h-2V23h-1z" fill="#fff" stroke="none" />
      </svg>
      <span className="ml-[3px] text-xs leading-4">LUZ</span>
      <span className="ml-1 border-l border-[#999] pl-1 text-[6px] leading-[6px] font-normal text-[#b5b5b5]">
        Planilhas
        <br />
        Empresariais
      </span>
    </div>
  );
}

function Report() {
  return (
    <div className={`min-w-0 flex-1 overflow-hidden border-r border-[#ababab] bg-white ${CALIBRI}`}>
      <nav className="flex h-11 bg-[#404040] text-[11px] leading-[15px] font-bold text-white">
        <Logo />
        {mainNav.map((item) => (
          <a key={item.label} href="#" className={`flex shrink-0 items-center justify-center text-center ${item.width} ${item.active ? 'bg-[#6699cc]' : ''}`}>
            {item.label}
          </a>
        ))}
      </nav>
      <nav className="relative flex h-[35px] items-end bg-[#6699cc] pl-[98px] text-[11px] font-bold text-white">
        {subNav.map((item) => (
          <a
            key={item.label}
            href="#"
            className={`flex h-[27px] shrink-0 items-center justify-center pt-[2px] whitespace-nowrap ${item.width} ${item.active ? 'bg-white text-[#404040]' : ''}`}
          >
            {item.label}
          </a>
        ))}
        {/* selected cell B2 */}
        <div className="absolute top-0 left-[13px] h-9 w-[19px] border-2 border-[#217346]">
          <div className="size-full border border-white" />
          <div className="absolute -right-[3px] -bottom-[3px] size-[6px] border-t border-l border-white bg-[#217346]" />
        </div>
      </nav>

      <section className="mt-[6px] ml-[30px] w-[900px] border border-[#d9d9d9]">
        <div className="flex h-[91px]">
          <div className="flex w-[148px] shrink-0 flex-col bg-[#f2b800] pl-3 text-white">
            <p className="text-[13px] leading-[18px] font-semibold">
              Percentual de
              <br />
              conclusão do projeto
            </p>
            <p className="mt-[11px] pr-3 text-center text-4xl leading-[40px] font-bold">75%</p>
          </div>
          <div className="flex flex-1 items-center bg-[#f2f2f2] pb-1 pl-3">
            <p className="text-[13px] leading-[18px] font-semibold whitespace-nowrap text-[#262626]">
              Já foi concluído 75% do total planejado para o projeto e você ainda está dentro do prazo. Mantenha a execução para finalizar o
              <br />
              projeto sem atraso e verifique se há tarefas finalizadas que ainda não foram marcadas no cronograma.
            </p>
          </div>
        </div>
        <p className="h-[25px] bg-[#d9d9d9] pl-3 text-[11px] leading-[25px] font-bold text-[#404040]">
          ATENÇÃO! HOJE É O ÚLTIMO DIA PARA CONCLUIR O PROJETO
        </p>
      </section>

      <table className={`mt-[10px] ml-[30px] w-[900px] table-fixed border-separate border-spacing-0 text-left text-[#505050] ${UI}`}>
        <thead>
          <tr className={`h-[38px] text-[11px] leading-[17px] text-[#404040] ${CALIBRI}`}>
            {tableHead.map((col) => (
              <th key={col.label} className={`border-2 border-t-1 border-l-1 border-white bg-[#d9d9d9] py-0 pr-1 pl-[11px] font-bold first:border-l-2 ${col.width}`}>
                {col.label}
              </th>
            ))}
          </tr>
        </thead>
        <tbody>
          {tasks.map((task) => (
            <tr key={task.cells[0]} className={`bg-[#f2f2f2] text-xs ${task.height}`}>
              {task.cells.map((cell, i) => (
                <td key={i} className="border-r border-b border-[#d9d9d9] py-0 pr-0 pl-3 first:border-l">
                  {cell}
                </td>
              ))}
            </tr>
          ))}
        </tbody>
      </table>
    </div>
  );
}

function Sheet() {
  return (
    <div className="flex min-h-0 flex-1">
      <div className="flex min-w-0 flex-1 flex-col">
        <ColumnHeader />
        <div className="relative flex min-h-0 flex-1">
          <div className={`w-[25px] shrink-0 overflow-hidden border-r border-[#ababab] text-[13px] font-medium text-[#262626] ${CALIBRI}`}>
            {rows.map((row) => (
              <div
                key={row.label}
                className={`flex items-end justify-center overflow-hidden border-b border-[#b8b8b8] ${row.height} ${
                  row.active ? 'border-r-2 border-r-[#217346] bg-[#d2d2d2] text-[#217346]' : ''
                }`}
              >
                {row.label}
              </div>
            ))}
          </div>
          <Report />
          {/* frozen panes line */}
          <div className="absolute top-[250px] left-0 h-px w-full bg-[#8f8f8f]" />
        </div>
      </div>
      <div className="mr-[3px] ml-1 flex w-[14px] shrink-0 flex-col pt-[2px]">
        <button type="button" aria-label="Rolar para cima" className="flex h-[15px] items-center justify-center border border-[#ababab] bg-white">
          <svg width="7" height="4" viewBox="0 0 7 4" fill="#777" aria-hidden="true">
            <path d="M0 4h7L3.500 0z" />
          </svg>
        </button>
        <div className="flex-1 bg-[#d9d9d9]">
          <div className="h-4 border border-t-0 border-[#ababab] bg-white" />
        </div>
        <button type="button" aria-label="Rolar para baixo" className="flex h-[14px] items-center justify-center border border-[#ababab] bg-white">
          <svg width="7" height="4" viewBox="0 0 7 4" fill="#777" aria-hidden="true">
            <path d="M0 0h7L3.500 4z" />
          </svg>
        </button>
      </div>
    </div>
  );
}

function SheetTabs() {
  return (
    <div className="flex h-[27px] items-start border-t border-b border-[#b8b8b8] text-xs text-[#444]">
      <div className="flex h-6 w-[95px] shrink-0 items-center justify-end gap-[22px] pr-2 text-[#107c41]">
        <Tool label="Planilha anterior">
          <svg width="5" height="7" viewBox="0 0 5 7" fill="currentColor" aria-hidden="true">
            <path d="M5 0v7L0 3.500z" />
          </svg>
        </Tool>
        <Tool label="Próxima planilha">
          <svg width="5" height="7" viewBox="0 0 5 7" fill="currentColor" aria-hidden="true">
            <path d="M0 0v7l5-3.500z" />
          </svg>
        </Tool>
        <span className="-ml-1 font-bold">...</span>
      </div>
      <div className="flex h-[25px] items-center">
        <Divider className="h-5 bg-[#ababab]" />
        {sheetTabs.map((tab) => (
          <button
            key={tab.label}
            type="button"
            className={`shrink-0 ${tab.width} ${
              tab.active ? '-mt-px h-[25px] border-x border-b-2 border-x-[#ababab] border-b-[#217346] bg-white font-bold text-[#217346]' : 'h-5 border-r border-[#ababab]'
            }`}
          >
            {tab.label}
          </button>
        ))}
      </div>
      <div className="flex h-6 items-center">
        <span className="ml-[11px] w-[7px] overflow-hidden">D</span>
        <span className="ml-2 font-bold text-[#107c41]">...</span>
        <Tool label="Nova planilha" className="ml-3">
          <svg width="16" height="16" viewBox="0 0 16 16" fill="none" stroke="#808080" aria-hidden="true">
            <circle cx="8" cy="8" r="7.300" />
            <path d="M8 4v8M4 8h8" strokeWidth="2" />
          </svg>
        </Tool>
      </div>
      <div className="mr-[21px] ml-auto flex h-[26px] shrink-0 items-center">
        <svg width="2" height="10" viewBox="0 0 2 10" fill="#b0b0b0" className="mr-[15px]" aria-hidden="true">
          <path d="M0 0h2v2H0zM0 4h2v2H0zM0 8h2v2H0z" />
        </svg>
        <button type="button" aria-label="Rolar para a esquerda" className="flex h-[14px] w-[15px] items-center justify-center border border-[#ababab] bg-white">
          <svg width="4" height="7" viewBox="0 0 4 7" fill="#666" aria-hidden="true">
            <path d="M4 0v7L0 3.500z" />
          </svg>
        </button>
        <div className="h-[14px] w-[121px] bg-[#d9d9d9]">
          <div className="h-full w-[68px] border border-l-0 border-[#ababab] bg-white" />
        </div>
        <button type="button" aria-label="Rolar para a direita" className="flex size-[14px] items-center justify-center border border-[#ababab] bg-white">
          <svg width="4" height="7" viewBox="0 0 4 7" fill="#666" aria-hidden="true">
            <path d="M0 0v7l4-3.500z" />
          </svg>
        </button>
      </div>
    </div>
  );
}

function StatusBar() {
  return (
    <footer className="flex h-5 items-center bg-[#f3f3f3] pl-[7px] text-[11px] text-[#262626]">
      <span className="w-[35px]">Pronto</span>
      <Tool label="Gravar macro" className="ml-[17px]">
        <svg width="13" height="12" viewBox="0 0 13 12" fill="none" stroke="#666" aria-hidden="true">
          <path d="M7 1.500h5.500v10h-11V6M6 4.500h6M4 6.500h1M7 6.500h1M10 6.500h1M4 8.500h1M7 8.500h1M10 8.500h1" />
          <circle cx="3" cy="3" r="2.500" fill="#555" stroke="none" />
        </svg>
      </Tool>
      <div className="ml-auto flex h-full items-center pr-2">
        <button type="button" aria-label="Normal" className="flex h-full w-[35px] items-center justify-center bg-[#c8c8c8]">
          <svg width="13" height="12" viewBox="0 0 13 12" fill="none" stroke="#666" aria-hidden="true">
            <path d="M.5.500h12v11H.5zM.5 4h12M.5 8h12M4.500.500v11M8.500.500v11" />
          </svg>
        </button>
        <Tool label="Layout da página" className="w-[37px]">
          <svg width="14" height="12" viewBox="0 0 14 12" fill="none" stroke="#666" aria-hidden="true">
            <path d="M.5.500h13v11h-13zM3.500 2.500h7v7h-7zM5 4.500h4M5 6.500h4M5 8.500h4" />
          </svg>
        </Tool>
        <Tool label="Quebra de página" className="w-[35px]">
          <svg width="14" height="12" viewBox="0 0 14 12" fill="none" stroke="#666" aria-hidden="true">
            <path d="M.5.500h13v11h-13zM.5 6.500h8V.500M4.500.500v6" />
          </svg>
        </Tool>
        <Tool label="Reduzir" className="w-4">
          <span className="h-[2px] w-[6px] bg-[#555]" />
        </Tool>
        <input
          type="range"
          aria-label="Zoom"
          min={10}
          max={190}
          defaultValue={90}
          className="h-3 w-[95px] appearance-none bg-[linear-gradient(#b0b0b0,#b0b0b0)] bg-[length:100%_1px] bg-center bg-no-repeat [&::-webkit-slider-thumb]:h-[11px] [&::-webkit-slider-thumb]:w-[5px] [&::-webkit-slider-thumb]:appearance-none [&::-webkit-slider-thumb]:bg-[#555]"
        />
        <Tool label="Ampliar" className="w-[14px]">
          <svg width="7" height="7" viewBox="0 0 7 7" stroke="#555" strokeWidth="2" aria-hidden="true">
            <path d="M3.500 0v7M0 3.500h7" />
          </svg>
        </Tool>
        <span className="ml-[6px] text-[10px]">90%</span>
      </div>
    </footer>
  );
}

export default function App() {
  return (
    <div className={`flex h-screen flex-col overflow-hidden bg-[#e6e6e6] ${UI}`}>
      <TitleBar />
      <RibbonTabs />
      <Ribbon />
      <FormulaBar />
      <Sheet />
      <SheetTabs />
      <StatusBar />
      <div className="flex h-[2px] bg-[#1d2426]">
        <div className="ml-[46px] w-[327px] bg-[#e0e0e0]" />
        <div className="ml-[283px] w-[46px] bg-[#5a5657]" />
      </div>
    </div>
  );
}
